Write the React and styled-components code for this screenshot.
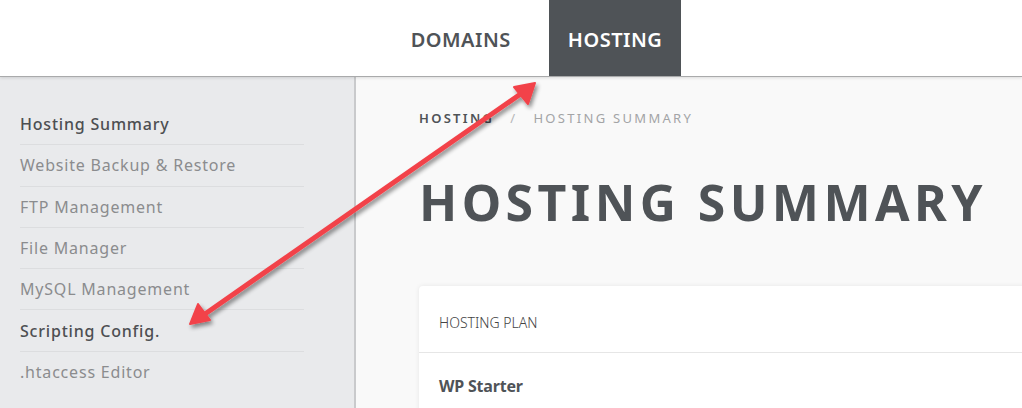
import React from 'react';
import styled, { createGlobalStyle } from 'styled-components';

const Global = createGlobalStyle`
  html, body {
    margin: 0;
    padding: 0;
    height: 408px;
    overflow: hidden;
    background: #f9f9f9;
    font-family: "Noto Sans", "DejaVu Sans", sans-serif;
  }
`;

const sideItems = [
  { label: 'Hosting Summary', active: true },
  { label: 'Website Backup & Restore' },
  { label: 'FTP Management' },
  { label: 'File Manager' },
  { label: 'MySQL Management' },
  { label: 'Scripting Config.', active: true },
  { label: '.htaccess Editor' },
];

export default function App() {
  return (
    <Page>
      <Global />
      <Header>
        <Tab>DOMAINS</Tab>
        <Tab active>HOSTING</Tab>
      </Header>
      <Body>
        <Sidebar>
          {sideItems.map((item, i) => (
            <SideItem key={i} active={item.active} last={i === sideItems.length - 1}>
              {item.label}
            </SideItem>
          ))}
        </Sidebar>
        <Main>
          <Crumbs>
            <Crumb current>HOSTING</Crumb>
            <Slash>/</Slash>
            <Crumb>HOSTING SUMMARY</Crumb>
          </Crumbs>
          <Title>HOSTING SUMMARY</Title>
          <Card>
            <CardHead>HOSTING PLAN</CardHead>
            <CardBody>WP Starter</CardBody>
          </Card>
        </Main>
      </Body>
      <Arrow width="1022" height="408" viewBox="0 0 1022 408">
        <defs>
          <filter id="sh" x="-20%" y="-20%" width="140%" height="140%">
            <feGaussianBlur in="SourceAlpha" stdDeviation="2" />
            <feOffset dx="2" dy="3" />
            <feComponentTransfer>
              <feFuncA type="linear" slope="0.45" />
            </feComponentTransfer>
            <feMerge>
              <feMergeNode />
              <feMergeNode in="SourceGraphic" />
            </feMerge>
          </filter>
        </defs>
        <g filter="url(#sh)" fill="#f2434a" stroke="#f2434a">
          <line x1="205" y1="314" x2="522" y2="93" strokeWidth="5" strokeLinecap="round" />
          <polygon points="535,83 514,87 528,104" strokeWidth="2" strokeLinejoin="round" />
          <polygon points="190,324 198,304 210,320" strokeWidth="2" strokeLinejoin="round" />
        </g>
      </Arrow>
    </Page>
  );
}

const Page = styled.div`
  position: relative;
  width: 1022px;
  height: 408px;
  overflow: hidden;
`;

const Header = styled.div`
  height: 76px;
  background: #fff;
  border-bottom: 1px solid #a9aaab;
  box-shadow: 0 1px 3px rgba(0, 0, 0, 0.12);
  display: flex;
  justify-content: center;
  gap: 19px;
  padding-left: 51px;
  position: relative;
  z-index: 1;
`;

const Tab = styled.div`
  padding: 2px 19px 0;
  display: flex;
  align-items: center;
  justify-content: center;
  font-size: 20px;
  font-weight: 600;
  letter-spacing: 0.5px;
  color: ${p => (p.active ? '#fff' : '#4f5357')};
  background: ${p => (p.active ? '#4f5357' : 'transparent')};
`;

const Body = styled.div`
  display: flex;
  height: 331px;
`;

const Sidebar = styled.div`
  width: 356px;
  flex: none;
  background: #e9eaec;
  border-right: 2px solid #c9cacc;
  padding: 27px 50px 0 20px;
  box-sizing: border-box;
`;

const SideItem = styled.div`
  height: 41.3px;
  display: flex;
  align-items: center;
  font-size: 16px;
  letter-spacing: 0.8px;
  color: ${p => (p.active ? '#4d4f52' : '#8b8c8e')};
  font-weight: ${p => (p.active ? 500 : 400)};
  border-bottom: ${p => (p.last ? 'none' : '1px solid #dcdddf')};
  box-sizing: border-box;
`;

const Main = styled.div`
  flex: 1;
  background: #f9f9f9;
  padding: 32px 0 0 63px;
  min-width: 0;
`;

const Crumbs = styled.div`
  display: flex;
  align-items: center;
  gap: 14px;
  font-size: 13px;
  letter-spacing: 2.3px;
  height: 18px;
`;

const Crumb = styled.span`
  color: ${p => (p.current ? '#4f5357' : '#a3a4a6')};
  font-weight: ${p => (p.current ? 600 : 400)};
`;

const Slash = styled.span`
  color: #b5b6b8;
  padding: 0 2px;
`;

const Title = styled.h1`
  margin: 45px 0 0;
  font-size: 50px;
  line-height: 60px;
  font-weight: 700;
  letter-spacing: 4.4px;
  color: #4f5357;
  white-space: nowrap;
`;

const Card = styled.div`
  margin-top: 54px;
  background: #fff;
  border-radius: 4px 0 0 0;
  box-shadow: 0 0 5px rgba(0, 0, 0, 0.08);
  margin-right: -20px;
`;

const CardHead = styled.div`
  height: 67px;
  box-sizing: border-box;
  display: flex;
  align-items: center;
  padding: 7px 0 0 20px;
  font-size: 14px;
  font-weight: 300;
  color: #444;
  border-bottom: 1px solid #e6e6e6;
`;

const CardBody = styled.div`
  padding: 22px 20px;
  font-size: 16px;
  letter-spacing: -0.2px;
  font-weight: 700;
  color: #4f5357;
`;

const Arrow = styled.svg`
  position: absolute;
  left: 0;
  top: 0;
  pointer-events: none;
  z-index: 5;
`;
